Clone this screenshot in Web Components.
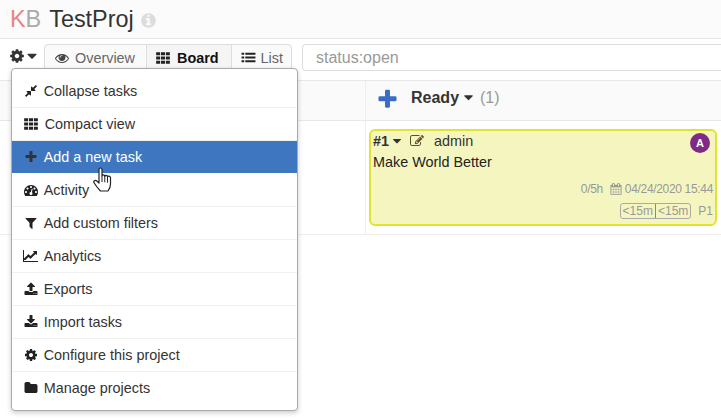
<!DOCTYPE html>
<html>
<head>
<meta charset="utf-8">
<title>KB TestProj</title>
<style>
  html, body { margin: 0; padding: 0; background: #fff; }
  body { position: relative; width: 721px; height: 419px; overflow: hidden; font: 14.4px "Liberation Sans", Arial, sans-serif; color: #333; }
</style>
</head>
<body>
<kb-page>
  <kb-header slot="header" title-text="TestProj"></kb-header>
  <kb-toolbar slot="toolbar" filter="status:open"></kb-toolbar>
  <kb-board slot="board">
    <kb-task num="#1" user="admin" avatar="A" title-text="Make World Better" time="0/5h" date="04/24/2020 15:44"></kb-task>
  </kb-board>
  <kb-menu slot="overlay">
    <kb-menu-item icon="compress">Collapse tasks</kb-menu-item>
    <kb-menu-item icon="th" nudge>Compact view</kb-menu-item>
    <kb-menu-item icon="plus" active>Add a new task</kb-menu-item>
    <kb-menu-item icon="dashboard">Activity</kb-menu-item>
    <kb-menu-item icon="filter">Add custom filters</kb-menu-item>
    <kb-menu-item icon="chart">Analytics</kb-menu-item>
    <kb-menu-item icon="upload">Exports</kb-menu-item>
    <kb-menu-item icon="download">Import tasks</kb-menu-item>
    <kb-menu-item icon="cog">Configure this project</kb-menu-item>
    <kb-menu-item icon="folder" last>Manage projects</kb-menu-item>
  </kb-menu>
  <kb-cursor slot="overlay"></kb-cursor>
</kb-page>

<script>
const ICONS = {
  cog: 'M1152 896q0-106-75-181t-181-75-181 75-75 181 75 181 181 75 181-75 75-181zm512-109v222q0 12-8 23t-20 13l-185 28q-19 54-39 91 35 50 107 138 10 12 10 25t-9 23q-27 37-99 108t-94 71q-12 0-26-9l-138-108q-44 23-91 38-16 136-29 186-7 28-36 28h-222q-14 0-24.500-8.500t-11.500-21.500l-28-184q-49-16-90-37l-141 107q-10 9-25 9-14 0-25-11-126-114-165-168-7-10-7-23 0-12 8-23 15-21 51-66.500t54-70.500q-27-50-41-99l-183-27q-13-2-21-12.500t-8-23.500v-222q0-12 8-23t19-13l186-28q14-46 39-92-40-57-107-138-10-12-10-24 0-10 9-23 26-36 98.500-107.500t94.500-71.500q13 0 26 10l138 107q44-23 91-38 16-136 29-186 7-28 36-28h222q14 0 24.500 8.500t11.500 21.500l28 184q49 16 90 37l142-107q9-9 24-9 13 0 25 10 129 119 165 170 7 8 7 22 0 12-8 23-15 21-51 66.500t-54 70.500q26 50 41 98l183 28q13 2 21 12.500t8 23.500z',
  caret: 'M1408 704q0 26-19 45l-448 448q-19 19-45 19t-45-19l-448-448q-19-19-19-45t19-45 45-19h896q26 0 45 19t19 45z',
  eye: 'M1664 960q-152-236-381-353 61 104 61 225 0 185-131.500 316.500t-316.500 131.500-316.500-131.500-131.500-316.500q0-121 61-225-229 117-381 353 133 205 333.500 326.500t434.500 121.500 434.500-121.500 333.500-326.500zm-720-384q0-20-14-34t-34-14q-125 0-214.500 89.500t-89.500 214.500q0 20 14 34t34 14 34-14 14-34q0-86 61-147t147-61q20 0 34-14t14-34zm848 384q0 34-20 69-140 230-376.500 368.500t-499.500 138.500-499.500-139-376.500-368q-20-35-20-69t20-69q140-229 376.500-368t499.500-139 499.500 139 376.500 368q20 35 20 69z',
  th: 'M128 256h448v340h-448zM672 256h448v340h-448zM1216 256h448v340h-448zM128 726h448v340h-448zM672 726h448v340h-448zM1216 726h448v340h-448zM128 1196h448v340h-448zM672 1196h448v340h-448zM1216 1196h448v340h-448z',
  list: 'M64 320h320v260h-320zM512 320h1216v260h-1216zM64 766h320v260h-320zM512 766h1216v260h-1216zM64 1212h320v260h-320zM512 1212h1216v260h-1216z',
  plus: 'M1600 736v192q0 40-28 68t-68 28h-416v416q0 40-28 68t-68 28h-192q-40 0-68-28t-28-68v-416h-416q-40 0-68-28t-28-68v-192q0-40 28-68t68-28h416v-416q0-40 28-68t68-28h192q40 0 68 28t28 68v416h416q40 0 68 28t28 68z',
  compress: 'M896 960v448q0 26-19 45t-45 19-45-19l-144-144-332 332q-10 10-23 10t-23-10l-114-114q-10-10-10-23t10-23l332-332-144-144q-19-19-19-45t19-45 45-19h448q26 0 45 19t19 45zm755-672q0 13-10 23l-332 332 144 144q19 19 19 45t-19 45-45 19h-448q-26 0-45-19t-19-45v-448q0-26 19-45t45-19 45 19l144 144 332-332q10-10 23-10t23 10l114 114q10 10 10 23z',
  dashboard: 'M384 1152q0-53-37.500-90.500t-90.500-37.500-90.500 37.500-37.500 90.500 37.500 90.500 90.500 37.500 90.500-37.500 37.500-90.500zm192-448q0-53-37.500-90.500t-90.500-37.500-90.500 37.500-37.500 90.500 37.500 90.500 90.500 37.500 90.500-37.500 37.500-90.500zm428 481l101-382q6-26-7.500-48.500t-38.500-29.500-48 6.500-30 39.500l-101 382q-60 5-107 43.500t-63 98.500q-20 77 20 146t117 89 146-20 89-117q16-60-6-117t-72-91zm660-33q0-53-37.500-90.500t-90.500-37.500-90.500 37.500-37.500 90.500 37.500 90.500 90.500 37.500 90.500-37.500 37.500-90.500zm-640-640q0-53-37.500-90.500t-90.500-37.500-90.500 37.500-37.500 90.500 37.500 90.500 90.500 37.500 90.500-37.500 37.500-90.500zm448 192q0-53-37.500-90.500t-90.500-37.500-90.500 37.500-37.500 90.500 37.500 90.500 90.500 37.500 90.500-37.500 37.500-90.500zm320 448q0 261-141 483-19 29-54 29h-1402q-35 0-54-29-141-221-141-483 0-182 71-348t191-286 286-191 348-71 348 71 286 191 191 286 71 348z',
  filter: 'M1595 295q17 41-14 70l-493 493v742q0 42-39 59-13 5-25 5-27 0-45-19l-256-256q-19-19-19-45v-486l-493-493q-31-29-14-70 17-39 59-39h1280q42 0 59 39z',
  chart: 'M1920 1536v128h-1920v-1536h128v1408h1792zm-128-1248v435q0 21-19.500 29.500t-35.500-7.500l-121-121-633 633q-10 10-23 10t-23-10l-233-233-416 416-192-192 585-585q10-10 23-10t23 10l233 233 464-464-121-121q-16-16-7.500-35.500t29.500-19.500h435q14 0 23 9t9 23z',
  upload: 'M1344 1472q0-26-19-45t-45-19-45 19-19 45 19 45 45 19 45-19 19-45zm256 0q0-26-19-45t-45-19-45 19-19 45 19 45 45 19 45-19 19-45zm128-224v320q0 40-28 68t-68 28h-1472q-40 0-68-28t-28-68v-320q0-40 28-68t68-28h427q21 56 70.500 92t110.500 36h256q61 0 110.500-36t70.500-92h427q40 0 68 28t28 68zm-325-648q-17 40-59 40h-256v448q0 26-19 45t-45 19h-256q-26 0-45-19t-19-45v-448h-256q-42 0-59-40-17-39 14-69l448-448q18-19 45-19t45 19l448 448q31 30 14 69z',
  download: 'M1344 1344q0-26-19-45t-45-19-45 19-19 45 19 45 45 19 45-19 19-45zm256 0q0-26-19-45t-45-19-45 19-19 45 19 45 45 19 45-19 19-45zm128-224v320q0 40-28 68t-68 28h-1472q-40 0-68-28t-28-68v-320q0-40 28-68t68-28h465l135 136q58 56 136 56t136-56l136-136h464q40 0 68 28t28 68zm-325-569q17 41-14 70l-448 448q-18 19-45 19t-45-19l-448-448q-31-29-14-70 17-39 59-39h256v-448q0-26 19-45t45-19h256q26 0 45 19t19 45v448h256q42 0 59 39z',
  folder: 'M1728 608v704q0 92-66 158t-158 66h-1216q-92 0-158-66t-66-158v-960q0-92 66-158t158-66h320q92 0 158 66t66 158v32h672q92 0 158 66t66 158z',
  info: 'M1152 1376v-160q0-14-9-23t-23-9h-96v-512q0-14-9-23t-23-9h-320q-14 0-23 9t-9 23v160q0 14 9 23t23 9h96v320h-96q-14 0-23 9t-9 23v160q0 14 9 23t23 9h448q14 0 23-9t9-23zm-128-896v-160q0-14-9-23t-23-9h-192q-14 0-23 9t-9 23v160q0 14 9 23t23 9h192q14 0 23-9t9-23zm640 416q0 209-103 385.500t-279.500 279.500-385.500 103-385.500-103-279.500-279.500-103-385.500 103-385.500 279.500-279.500 385.500-103 385.500 103 279.500 279.500 103 385.500z',
  edit: 'M888 1184l116-116-152-152-116 116v56h96v96h56zm440-720q-16-16-33 1l-350 350q-17 17-1 33t33-1l350-350q17-17 1-33zm80 594v190q0 119-84.500 203.500t-203.500 84.500h-832q-119 0-203.500-84.500t-84.500-203.500v-832q0-119 84.500-203.500t203.500-84.500h832q63 0 117 25 15 7 18 23 3 17-9 29l-49 49q-14 14-32 8-23-6-45-6h-832q-66 0-113 47t-47 113v832q0 66 47 113t113 47h832q66 0 113-47t47-113v-126q0-13 9-22l64-64q15-15 35-7t20 29zm-96-738l288 288-672 672h-288v-288zm444 132l-92 92-288-288 92-92q28-28 68-28t68 28l152 152q28 28 28 68t-28 68z',
  calendar: 'M192 1664h288v-288h-288v288zm352 0h320v-288h-320v288zm-352-352h288v-320h-288v320zm352 0h320v-320h-320v320zm-352-384h288v-288h-288v288zm736 736h320v-288h-320v288zm-384-736h320v-288h-320v288zm768 736h288v-288h-288v288zm-384-352h320v-320h-320v320zm-352-864v-288q0-13-9.500-22.500t-22.500-9.500h-64q-13 0-22.500 9.500t-9.500 22.500v288q0 13 9.500 22.500t22.500 9.500h64q13 0 22.500-9.500t9.500-22.500zm736 864h288v-320h-288v320zm-384-384h320v-288h-320v288zm384 0h288v-288h-288v288zm32-480v-288q0-13-9.500-22.500t-22.500-9.500h-64q-13 0-22.500 9.500t-9.500 22.500v288q0 13 9.500 22.500t22.500 9.500h64q13 0 22.500-9.500t9.500-22.500zm384-64v1280q0 52-38 90t-90 38h-1408q-52 0-90-38t-38-90v-1280q0-52 38-90t90-38h128v-96q0-66 47-113t113-47h64q66 0 113 47t47 113v96h384v-96q0-66 47-113t113-47h64q66 0 113 47t47 113v96h128q52 0 90 38t38 90z'
}

class KbIcon extends HTMLElement {
  connectedCallback() {
    const name = this.getAttribute('name')
    const size = this.getAttribute('size') || 14
    const vb = name === 'chart' ? '0 0 2048 1792' : '0 0 1792 1792'
    const w = name === 'chart' ? size * 8 / 7 : size
    this.attachShadow({mode: 'open'}).innerHTML = `
    <style>
      :host { display: inline-flex; align-items: center; justify-content: center; flex: none; }
      svg { display: block; fill: currentColor; }
    </style>
    <svg width="${w}" height="${size}" viewBox="${vb}"><path d="${ICONS[name]}"/></svg>
    `
  }
}
customElements.define('kb-icon', KbIcon)

class KbPage extends HTMLElement {
  connectedCallback() {
    this.attachShadow({mode: 'open'}).innerHTML = `
    <style>
      :host { display: flex; flex-direction: column; position: relative; height: 419px; }
    </style>
    <slot name="header"></slot>
    <slot name="toolbar"></slot>
    <slot name="board"></slot>
    <slot name="overlay"></slot>
    `
  }
}
customElements.define('kb-page', KbPage)

class KbHeader extends HTMLElement {
  connectedCallback() {
    this.attachShadow({mode: 'open'}).innerHTML = `
    <style>
      :host { display: flex; align-items: center; height: 38px; padding-left: 10px; background: #fbfbfb; border-bottom: 1px solid #e5e5e5; font-size: 23.4px; }
      .k { color: #e98484; }
      .b { color: #aaa; }
      .name { color: #333; margin-left: 8px; }
      kb-icon { color: #dcdcdc; margin-left: 6px; margin-top: 2px; }
    </style>
    <span><span class="k">K</span><span class="b">B</span></span>
    <span class="name">${this.getAttribute('title-text')}</span>
    <kb-icon name="info" size="17"></kb-icon>
    `
  }
}
customElements.define('kb-header', KbHeader)

class KbToolbar extends HTMLElement {
  connectedCallback() {
    this.attachShadow({mode: 'open'}).innerHTML = `
    <style>
      :host { display: flex; align-items: center; height: 27px; margin-top: 5px; padding-left: 9px; }
      .gear { display: flex; align-items: center; width: 35px; color: #333; margin-top: -3px; }
      .nav { display: flex; height: 25px; border: 1px solid #ddd; border-radius: 4px; background: #fafafa; }
      .nav a { display: flex; align-items: center; color: #666; border-left: 1px solid #ddd; white-space: nowrap; padding: 0 8px 0 9px; gap: 5px; }
      .nav a:first-child { border-left: 0; padding: 0 11px 0 10px; gap: 6px; }
      .nav a.on { color: #111; font-weight: bold; padding: 0 12px 0 8px; gap: 6px; background: #f5f5f5; }
      .nav a.on kb-icon, .nav a:last-child kb-icon { color: #222; }
      .nav a:first-child kb-icon { color: #444; }
      .filter { margin-left: 10px; flex: 1; height: 25px; border: 1px solid #ddd; border-right: 0; border-radius: 4px 0 0 4px; padding-left: 13px; display: flex; align-items: center; color: #999; font-size: 16px; }
    </style>
    <span class="gear"><kb-icon name="cog" size="16"></kb-icon><kb-icon name="caret" size="16" style="margin-left:-1px"></kb-icon></span>
    <div class="nav">
      <a><kb-icon name="eye" size="14"></kb-icon>Overview</a>
      <a class="on"><kb-icon name="th" size="16"></kb-icon>Board</a>
      <a><kb-icon name="list" size="15"></kb-icon>List</a>
    </div>
    <div class="filter">${this.getAttribute('filter')}</div>
    `
  }
}
customElements.define('kb-toolbar', KbToolbar)

class KbBoard extends HTMLElement {
  connectedCallback() {
    this.attachShadow({mode: 'open'}).innerHTML = `
    <style>
      :host { display: grid; grid-template-columns: 365px 1fr; grid-template-rows: 40px 114px; margin-top: 9px; border-top: 1px solid #e8e8e8; }
      .h { background: #fafafa; border-bottom: 1px solid #e8e8e8; }
      .h.r { border-left: 1px solid #eee; display: flex; align-items: center; padding-left: 10px; font-size: 16px; }
      .h.r kb-icon.plus { color: #3b6cc4; margin-right: 12px; margin-bottom: 2px; }
      .t { font-weight: bold; color: #333; display: flex; align-items: center; gap: 2px; margin-bottom: 6px; }
      .n { color: #999; margin-left: 4px; margin-bottom: 6px; }
      .c { border-bottom: 1px solid #eee; }
      .c.r { border-left: 1px solid #eee; padding: 8px 4px 0 3px; }
    </style>
    <div class="h"></div>
    <div class="h r">
      <kb-icon class="plus" name="plus" size="23"></kb-icon>
      <span class="t">Ready<kb-icon name="caret" size="15"></kb-icon></span>
      <span class="n">(1)</span>
    </div>
    <div class="c"></div>
    <div class="c r"><slot></slot></div>
    `
  }
}
customElements.define('kb-board', KbBoard)

class KbTask extends HTMLElement {
  connectedCallback() {
    this.attachShadow({mode: 'open'}).innerHTML = `
    <style>
      :host { display: flex; flex-direction: column; height: 97px; box-sizing: border-box; background: #f5f6bf; border: 2px solid #e3e32f; border-radius: 6px; padding: 0 2px; color: #333; }
      .top { display: flex; align-items: center; height: 20px; }
      .num { font-weight: bold; }
      .top kb-icon.c { margin-left: 1px; }
      .top kb-icon.e { color: #5e4d2c; margin-left: 6px; }
      .user { margin-left: 10px; }
      .av { margin-left: auto; width: 20px; height: 20px; border-radius: 50%; background: #7f2b86; color: #fff; font-size: 11px; font-weight: bold; display: flex; align-items: center; justify-content: center; margin-right: 3px; margin-top: 3px; }
      .title { margin-top: 3px; color: #222; }
      .meta { margin-top: auto; margin-bottom: 3px; display: flex; justify-content: flex-end; align-items: center; gap: 7px; color: #999; font-size: 12px; letter-spacing: -.33px; height: 20px; }
      .date { display: flex; align-items: center; gap: 3px; }
      .foot { display: flex; justify-content: flex-end; align-items: center; gap: 7px; color: #999; font-size: 12px; height: 18px; margin-bottom: 4px; }
      .est { display: flex; border: 1px solid #aaa; border-radius: 3px; height: 14px; line-height: 14px; }
      .est span { padding: 0 2px; }
      .est span + span { border-left: 1px solid #888; }
    </style>
    <div class="top">
      <span class="num">${this.getAttribute('num')}</span>
      <kb-icon class="c" name="caret" size="14"></kb-icon>
      <kb-icon class="e" name="edit" size="14"></kb-icon>
      <span class="user">${this.getAttribute('user')}</span>
      <span class="av">${this.getAttribute('avatar')}</span>
    </div>
    <div class="title">${this.getAttribute('title-text')}</div>
    <div class="meta">
      <span>${this.getAttribute('time')}</span>
      <span class="date"><kb-icon name="calendar" size="12"></kb-icon>${this.getAttribute('date')}</span>
    </div>
    <div class="foot">
      <span class="est"><span>&lt;15m</span><span>&lt;15m</span></span>
      <span>P1</span>
    </div>
    `
  }
}
customElements.define('kb-task', KbTask)

class KbMenu extends HTMLElement {
  connectedCallback() {
    this.attachShadow({mode: 'open'}).innerHTML = `
    <style>
      :host { position: absolute; left: 11px; top: 68px; width: 285px; padding: 6px 0 5px; background: #fff; border: 1px solid #aaa; border-radius: 4px; box-shadow: 0 2px 5px rgba(0,0,0,.2); }
    </style>
    <slot></slot>
    `
  }
}
customElements.define('kb-menu', KbMenu)

class KbMenuItem extends HTMLElement {
  connectedCallback() {
    const icon = this.getAttribute('icon')
    this.attachShadow({mode: 'open'}).innerHTML = `
    <style>
      :host { display: flex; align-items: center; height: 32px; border-bottom: 1px solid #f1f1f1; padding-left: 8px; color: #333; background-clip: padding-box; }
      :host([last]) { border-bottom-color: transparent; }
      :host([active]) { background-color: #3e77bf; color: #fff; border-bottom-color: transparent; }
      :host([active]) kb-icon { color: #333; }
      kb-icon { width: 22px; margin-right: 1.7px; color: #222; }
      :host([nudge]) kb-icon { margin-right: 2.700px; }
    </style>
    <kb-icon name="${icon}" size="${icon === 'th' ? 16 : 14}"></kb-icon><slot></slot>
    `
  }
}
customElements.define('kb-menu-item', KbMenuItem)

class KbCursor extends HTMLElement {
  connectedCallback() {
    this.attachShadow({mode: 'open'}).innerHTML = `
    <style>
      :host { position: absolute; left: 93px; top: 166px; width: 21px; height: 28px; }
      svg { display: block; }
    </style>
    <svg width="21" height="28" viewBox="0 0 21 28">
      <path d="M6 3.500c0-2 3-2 3 0V10c.3-1.500 2.500-1.500 2.800.3c.3-1.300 2.400-1.300 2.700.4c.4-1 2.300-.9 3 .8V18c0 3-1 5-2.500 7H7.500C5.500 23 3 20 1.200 17c-1.200-1.600.8-3.500 2.400-2.200L6 17z" fill="#fff" stroke="#222" stroke-width="1.200" stroke-linejoin="round"/>
      <path d="M9 10v6M11.800 10.300v6M14.500 10.700v6" fill="none" stroke="#222" stroke-width="1"/>
    </svg>
    `
  }
}
customElements.define('kb-cursor', KbCursor)
</script>
</body>
</html>
